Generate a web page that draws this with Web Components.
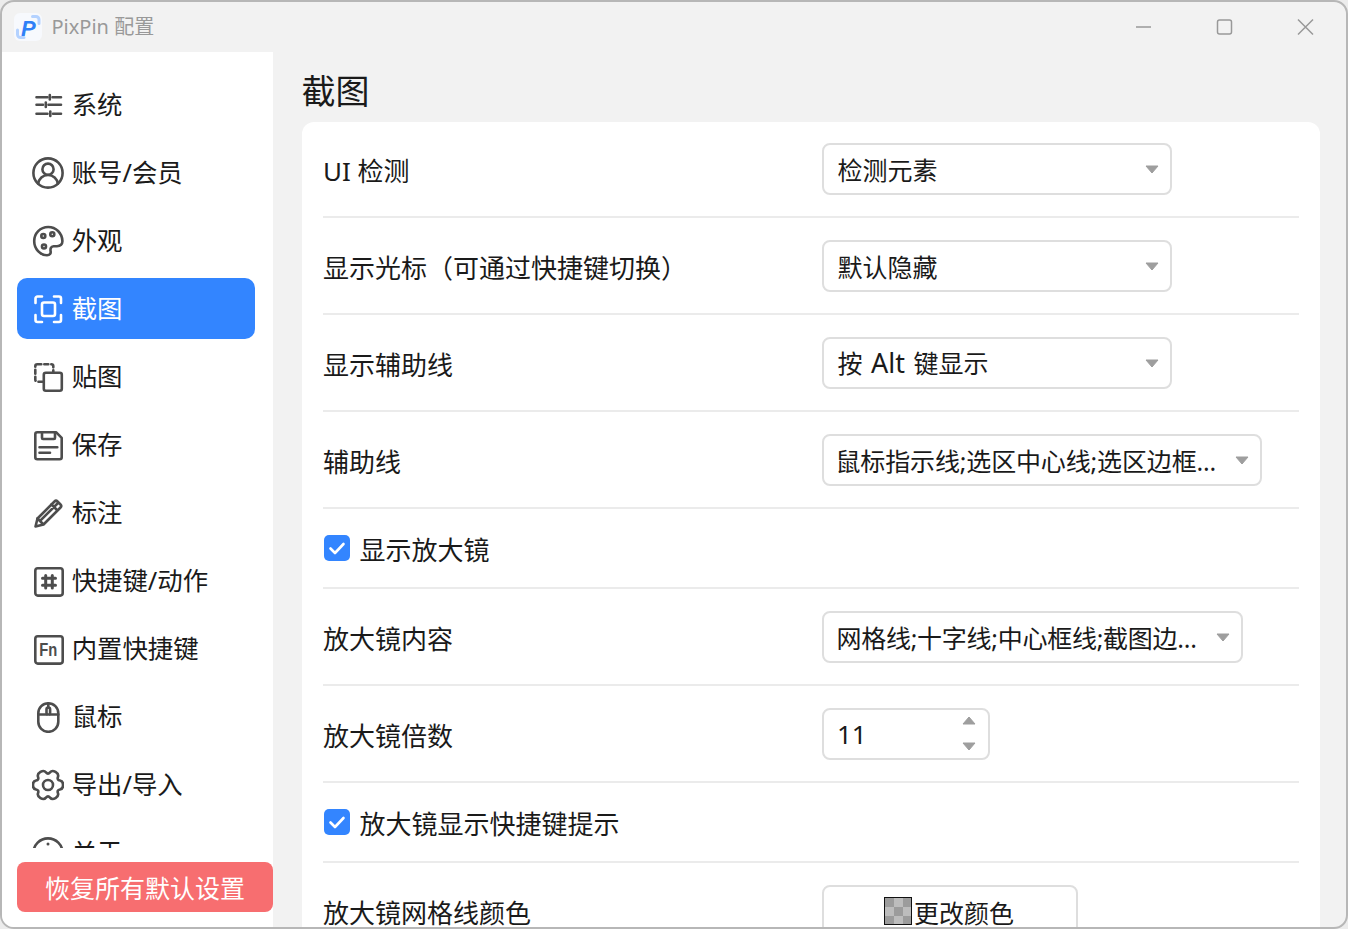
<!DOCTYPE html>
<html lang="zh-CN"><head><meta charset="utf-8"><title>PixPin 配置</title>
<style>
html,body{margin:0;height:100%;background:#ececec;overflow:hidden}
body{font-family:"Noto Sans","Noto Sans CJK SC",sans-serif;font-size:26px;color:#1a1a1a}
</style></head><body>
<pp-window>
  <pp-titlebar slot="title"></pp-titlebar>
  <pp-sidebar slot="side">
    <pp-nav icon="sliders">系统</pp-nav>
    <pp-nav icon="user">账号/会员</pp-nav>
    <pp-nav icon="palette">外观</pp-nav>
    <pp-nav icon="shot" active>截图</pp-nav>
    <pp-nav icon="pin">贴图</pp-nav>
    <pp-nav icon="save">保存</pp-nav>
    <pp-nav icon="pencil">标注</pp-nav>
    <pp-nav icon="hash">快捷键/动作</pp-nav>
    <pp-nav icon="fn">内置快捷键</pp-nav>
    <pp-nav icon="mouse">鼠标</pp-nav>
    <pp-nav icon="gear">导出/导入</pp-nav>
    <pp-nav icon="info">关于</pp-nav>
  </pp-sidebar>
  <pp-page slot="main" heading="截图">
    <pp-row h="96"><span slot="label">UI 检测</span><pp-select w="350">检测元素</pp-select></pp-row>
    <pp-row><span slot="label">显示光标（可通过快捷键切换）</span><pp-select w="350">默认隐藏</pp-select></pp-row>
    <pp-row><span slot="label">显示辅助线</span><pp-select w="350"><span style="word-spacing:2px">按 <span style="font-size:27px">Alt</span> 键显示</span></pp-select></pp-row>
    <pp-row><span slot="label">辅助线</span><pp-select w="440" style="padding-left:11.500px;letter-spacing:-.15px">鼠标指示线;选区中心线;选区边框...</pp-select></pp-row>
    <pp-row h="80"><pp-check slot="label">显示放大镜</pp-check></pp-row>
    <pp-row><span slot="label">放大镜内容</span><pp-select w="421" style="padding-left:12.500px;letter-spacing:-.27px">网格线;十字线;中心框线;截图边...</pp-select></pp-row>
    <pp-row><span slot="label">放大镜倍数</span><pp-spin>11</pp-spin></pp-row>
    <pp-row h="80"><pp-check slot="label">放大镜显示快捷键提示</pp-check></pp-row>
    <pp-row><span slot="label">放大镜网格线颜色</span><pp-color>更改颜色</pp-color></pp-row>
  </pp-page>
</pp-window>
<script>
function gearPath(){
  var pts=[],i,a,rad=Math.PI/180;
  for(i=0;i<6;i++){a=i*60;
    [[-30,10.2],[-15,15.6],[15,15.6]].forEach(function(p){
      pts.push([16+p[1]*Math.cos((a+p[0])*rad),16+p[1]*Math.sin((a+p[0])*rad)]);});
  }
  var d='',n=pts.length;
  for(i=0;i<n;i++){
    var c=pts[i],nx=pts[(i+1)%n],mx=(c[0]+nx[0])/2,my=(c[1]+nx[1])/2;
    if(i===0){var pv=pts[n-1];d+='M'+((pv[0]+c[0])/2).toFixed(2)+' '+((pv[1]+c[1])/2).toFixed(2);}
    d+='Q'+c[0].toFixed(2)+' '+c[1].toFixed(2)+' '+mx.toFixed(2)+' '+my.toFixed(2);
  }
  return d+'Z';
}
var ICONS={
  sliders:'<path d="M4.500 8.200h11M20.500 8.200h8.500M4.500 15.800h6.500M16.500 15.800h12.500M4.500 24.800h11M21 24.800h8"/><path d="M17.800 6v4.500M13.800 13.500v4.500M18.300 22.500v4.500"/>',
  user:'<circle cx="16" cy="16" r="14.600"/><circle cx="16" cy="12.200" r="5.600"/><path d="M6.200 26.600c.6-5 4.600-8.600 9.800-8.600s9.200 3.600 9.800 8.600"/>',
  palette:'<path d="M16.200 2C8.200 2 2.200 8.300 2.200 16c0 8 6 14.200 12.800 14.200 3 0 4-1.800 3.600-4-.4-2.400.2-4.800 3-5h3.400c3.400 0 5.600-2 5.400-5.400C30 8 24 2 16.200 2z"/><circle cx="11.300" cy="11" r="2"/><circle cx="20.300" cy="9.300" r="2"/><circle cx="12" cy="21.500" r="2"/>',
  shot:'<path d="M3.500 10V5.500a2 2 0 0 1 2-2H10M22 3.500h5a2 2 0 0 1 2 2V10M29 22v5a2 2 0 0 1-2 2h-5M10 29H5.500a2 2 0 0 1-2-2v-5"/><rect x="10" y="9.500" width="13" height="13.500" rx="2"/>',
  pin:'<rect x="3.300" y="3.200" width="18" height="17.500" rx="2" stroke-dasharray="4 3"/><rect x="11.800" y="11.700" width="18" height="18" rx="2" fill="#fff"/>',
  save:'<path d="M3.300 5.200a2 2 0 0 1 2-2h18.700l5.700 5.700v19.300a2 2 0 0 1-2 2H5.300a2 2 0 0 1-2-2z"/><path d="M10 3.200v5.800a1 1 0 0 0 1 1h11a1 1 0 0 0 1-1V3.200M7.500 18.300h17.800M7.500 23.800h10.500"/>',
  pencil:'<path d="M3.500 29.500l2-8L22.500 4.500c1-1 2-1 3 0l3 3c1 1 1 2 0 3L11.500 27.500z"/><path d="M5.500 21.500l5.500 5.500M8.800 23.200L26 6M19.500 7.500l5.500 5.500"/>',
  hash:'<rect x="3.300" y="3.200" width="27.400" height="27.400" rx="2.500"/><path stroke-width="3" d="M13.700 10.500v12.500M20.300 10.500v12.500M10.500 13.300h13M10.500 20.300h13"/>',
  fn:'<rect x="3.300" y="3.200" width="27.400" height="27.400" rx="2.500"/><text x="7.300" y="22.800" textLength="18" lengthAdjust="spacingAndGlyphs" font-family="Liberation Sans" font-weight="700" font-size="18" fill="#4d4d4d" stroke="none">Fn</text>',
  mouse:'<rect x="6.300" y="2.200" width="20" height="28.600" rx="10"/><path d="M16.300 2.200v4.300M6.300 13.500h8.200M18.100 13.500h8.200"/><rect x="14.500" y="6.500" width="3.600" height="7" rx="1.800"/>',
  gear:'<path d="'+gearPath()+'"/><circle cx="16" cy="16" r="5"/>',
  info:'<circle cx="16" cy="16" r="14.600"/><circle cx="16" cy="7" r="1.500" fill="#4d4d4d" stroke="none"/><path d="M16 13v11"/>'
};
function mk(name,html,init){
  customElements.define(name,class extends HTMLElement{
    constructor(){super();this.attachShadow({mode:'open'}).innerHTML=typeof html==='function'?html(this):html;}
    connectedCallback(){if(init)init(this,this.shadowRoot);}
  });
}
mk('pp-window',`<style>
:host{display:flex;flex-direction:column;box-sizing:border-box;width:1348px;height:929px;border:2px solid #b7b7b7;border-radius:14px;background:#f2f2f2;overflow:hidden}
.b{flex:1;min-height:0;display:flex}
</style><slot name="title"></slot><div class="b"><slot name="side"></slot><slot name="main"></slot></div>`);

mk('pp-titlebar',`<style>
:host{display:flex;align-items:center;height:50px;flex:none;position:relative}
.logo{width:28px;height:28px;margin-left:12px;flex:none;display:block}
.t{margin-left:9.500px;font-size:20px;color:#999;line-height:50px}
.ctl{margin-left:auto;display:flex}
.ctl svg{width:81px;height:30px;display:block;fill:none;stroke:#999;stroke-width:1.500}
</style>
<svg class="logo" viewBox="0 0 28 28"><rect width="28" height="28" rx="6" fill="#f7f9fd"/>
<path d="M18.500 3.500h3.500a3 3 0 0 1 3 3v4" fill="none" stroke="#b4d2ff" stroke-width="3" stroke-linecap="round"/>
<path d="M3.500 17v4.500a3 3 0 0 0 3 3h3.500" fill="none" stroke="#b4d2ff" stroke-width="3" stroke-linecap="round"/>
<text x="7" y="22.500" font-family="Liberation Sans" font-weight="700" font-style="italic" font-size="22" fill="#2f80f7">P</text></svg>
<span class="t">PixPin 配置</span>
<div class="ctl">
<svg viewBox="0 0 81 30"><path d="M33 15h15"/></svg>
<svg viewBox="0 0 81 30"><rect x="33.500" y="8" width="14" height="14" rx="2"/></svg>
<svg viewBox="0 0 81 30"><path d="M33 7.500l15 15M48 7.500l-15 15"/></svg>
</div>`);

mk('pp-sidebar',`<style>
:host{display:flex;flex-direction:column;box-sizing:border-box;width:271px;flex:none;background:#fff;padding-left:15px}
.n{height:796px;overflow:hidden;padding-top:22px;box-sizing:border-box;flex:none}
.r{box-sizing:border-box;margin-top:14px;height:50px;width:256px;flex:none;background:#f76e70;color:#fff;border:0;border-radius:8px;font:inherit;font-size:25px;display:flex;align-items:center;justify-content:center}
</style><div class="n"><slot></slot></div><div class="r">恢复所有默认设置</div>`);

mk('pp-nav',function(el){var k=el.getAttribute('icon');var a=el.hasAttribute('active');return `<style>
:host{display:flex;align-items:center;box-sizing:border-box;width:238px;height:61px;margin-bottom:7px;border-radius:10px;padding-left:15px;flex:none;color:#1a1a1a}
:host([active]){background:#3385ff;color:#fff}
svg{width:32px;height:32px;flex:none;fill:none;stroke:${a?'#fff':'#4d4d4d'};stroke-width:2.600;stroke-linecap:round;stroke-linejoin:round;display:block}
span{margin-left:7.700px;font-size:25.400px;line-height:61px;white-space:nowrap}
</style><svg viewBox="0 0 32 32">${ICONS[k]}</svg><span><slot></slot></span>`;});

mk('pp-page',function(el){return `<style>
:host{display:flex;flex-direction:column;flex:1;min-width:0;padding:0 26px 0 28.500px;overflow:hidden}
h1{margin:0;height:70px;flex:none;font-size:34px;font-weight:400;line-height:78px;color:#1a1a1a}
.c{flex:1;background:#fff;border-radius:12px 12px 0 0;padding:0 21px 0 21.500px;overflow:hidden}
</style><h1>${el.getAttribute('heading')}</h1><div class="c"><slot></slot></div>`;});

mk('pp-row',`<style>
:host{display:flex;align-items:center;box-sizing:border-box;height:var(--h,97px);border-bottom:2px solid #ebebeb;flex:none}
.l{width:499px;flex:none;white-space:nowrap;padding-top:2px}
</style><div class="l"><slot name="label"></slot></div><slot></slot>`,function(el){
  if(el.getAttribute('h'))el.style.setProperty('--h',el.getAttribute('h')+'px');
});

var fieldCss=`box-sizing:border-box;height:52px;border:2px solid #dedede;border-radius:8px;background:#fff;display:flex;align-items:center;white-space:nowrap;flex:none;`;
mk('pp-select',function(el){return `<style>
:host{${fieldCss}width:${el.getAttribute('w')}px;padding-left:13.500px;position:relative;font-size:25px}
i{position:absolute;right:11px;top:50%;margin-top:-4px;display:block}
svg{display:block}
</style><slot></slot><i><svg width="14" height="9" viewBox="0 0 14 9"><path d="M1 1h12L7 8z" fill="#9e9e9e" stroke="#9e9e9e" stroke-width="1" stroke-linejoin="round"/></svg></i>`;});

mk('pp-spin',`<style>
:host{${fieldCss}width:168px;padding-left:13px;justify-content:space-between}
.a{display:flex;flex-direction:column;gap:17px;margin-right:12px}
svg{display:block}
</style><slot></slot><div class="a">
<svg width="14" height="9" viewBox="0 0 14 9"><path d="M1 8h12L7 1z" fill="#9e9e9e" stroke="#9e9e9e" stroke-linejoin="round"/></svg>
<svg width="14" height="9" viewBox="0 0 14 9"><path d="M1 1h12L7 8z" fill="#9e9e9e" stroke="#9e9e9e" stroke-linejoin="round"/></svg></div>`);

mk('pp-check',`<style>
:host{display:flex;align-items:center;white-space:nowrap;padding-left:.5px}
.b{width:26px;height:26px;border-radius:5px;background:#3385ff;flex:none;margin-right:10px;display:block;margin-top:-2px}
</style><svg class="b" viewBox="0 0 26 26"><path d="M6.500 13.500l4.500 4.500 8.500-9" fill="none" stroke="#fff" stroke-width="2.600" stroke-linecap="round" stroke-linejoin="round"/></svg><slot></slot>`);

mk('pp-color',`<style>
:host{${fieldCss}width:256px;justify-content:center;gap:2px;font-size:25px;padding-top:2px;padding-right:2px}
.s{box-sizing:border-box;width:28px;height:28px;border:1px solid #111;display:block;flex:none;margin-top:-2px;
background-color:#bdbdbd;background-image:conic-gradient(#9c9c9c 25%,transparent 0 50%,#9c9c9c 0 75%,transparent 0);background-size:18px 18px;background-position:9px 0}
</style><span class="s"></span><slot></slot>`);
</script>
</body></html>
